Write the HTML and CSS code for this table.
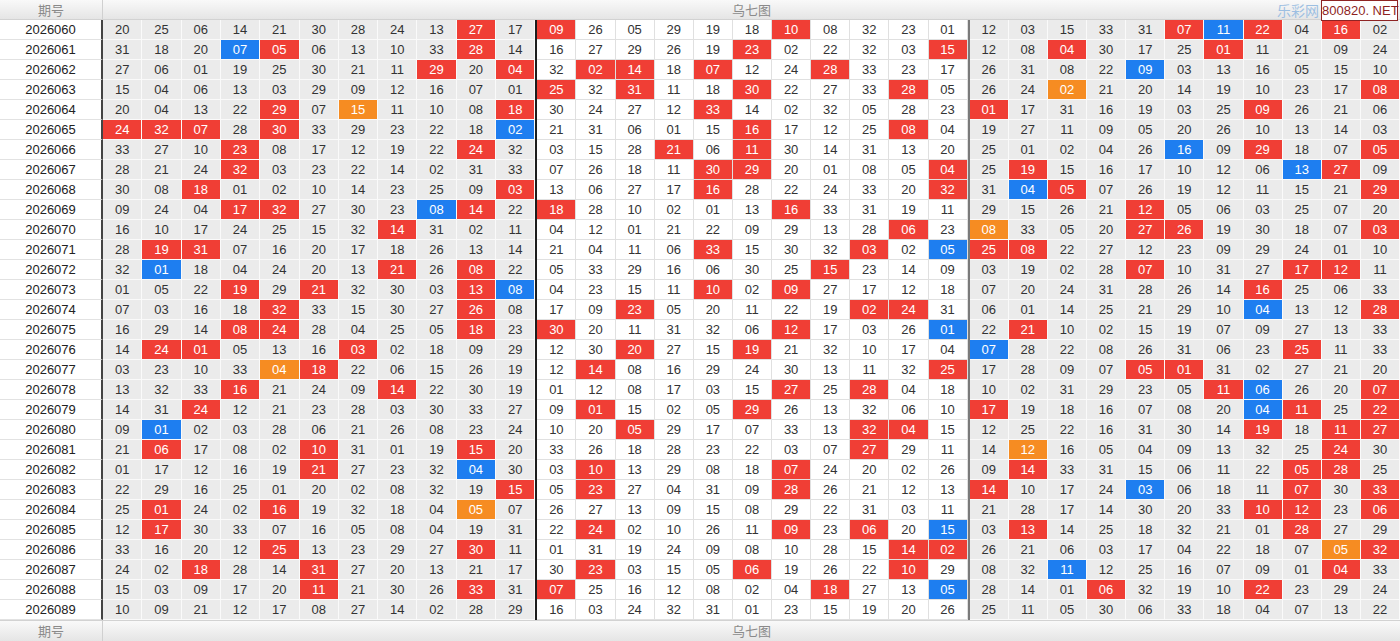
FILE: index.html
```html
<!DOCTYPE html>
<html lang="zh">
<head>
<meta charset="utf-8">
<title>乌七图</title>
<link rel="stylesheet" href="styles.css">
</head>
<body>
<div class="chart">
  <div class="bar head">
    <div class="bq">期号</div>
    <div class="bt">乌七图</div>
    <span class="wm">乐彩网</span>
    <span class="logo">800820. NET</span>
  </div>

  <div class="row"><div class="q">2026060</div>
    <div class="z z1"><i>20</i><i>25</i><i>06</i><i>14</i><i>21</i><i>30</i><i>28</i><i>24</i><i>13</i><i class="r">27</i><i>17</i></div>
    <div class="z z2"><i class="r">09</i><i>26</i><i>05</i><i>29</i><i>19</i><i>18</i><i class="r">10</i><i>08</i><i>32</i><i>23</i><i>01</i></div>
    <div class="z z3"><i>12</i><i>03</i><i>15</i><i>33</i><i>31</i><i class="r">07</i><i class="b">11</i><i class="r">22</i><i>04</i><i class="r">16</i><i>02</i></div>
  </div>
  <div class="row"><div class="q">2026061</div>
    <div class="z z1"><i>31</i><i>18</i><i>20</i><i class="b">07</i><i class="r">05</i><i>06</i><i>13</i><i>10</i><i>33</i><i class="r">28</i><i>14</i></div>
    <div class="z z2"><i>16</i><i>27</i><i>29</i><i>26</i><i>19</i><i class="r">23</i><i>02</i><i>22</i><i>32</i><i>03</i><i class="r">15</i></div>
    <div class="z z3"><i>12</i><i>08</i><i class="r">04</i><i>30</i><i>17</i><i>25</i><i class="r">01</i><i>11</i><i>21</i><i>09</i><i>24</i></div>
  </div>
  <div class="row"><div class="q">2026062</div>
    <div class="z z1"><i>27</i><i>06</i><i>01</i><i>19</i><i>25</i><i>30</i><i>21</i><i>11</i><i class="r">29</i><i>20</i><i class="r">04</i></div>
    <div class="z z2"><i>32</i><i class="r">02</i><i class="r">14</i><i>18</i><i class="r">07</i><i>12</i><i>24</i><i class="r">28</i><i>33</i><i>23</i><i>17</i></div>
    <div class="z z3"><i>26</i><i>31</i><i>08</i><i>22</i><i class="b">09</i><i>03</i><i>13</i><i>16</i><i>05</i><i>15</i><i>10</i></div>
  </div>
  <div class="row"><div class="q">2026063</div>
    <div class="z z1"><i>15</i><i>04</i><i>06</i><i>13</i><i>03</i><i>29</i><i>09</i><i>12</i><i>16</i><i>07</i><i>01</i></div>
    <div class="z z2"><i class="r">25</i><i>32</i><i class="r">31</i><i>11</i><i>18</i><i class="r">30</i><i>22</i><i>27</i><i>33</i><i class="r">28</i><i>05</i></div>
    <div class="z z3"><i>26</i><i>24</i><i class="o">02</i><i>21</i><i>20</i><i>14</i><i>19</i><i>10</i><i>23</i><i>17</i><i class="r">08</i></div>
  </div>
  <div class="row"><div class="q">2026064</div>
    <div class="z z1"><i>20</i><i>04</i><i>13</i><i>22</i><i class="r">29</i><i>07</i><i class="o">15</i><i>11</i><i>10</i><i>08</i><i class="r">18</i></div>
    <div class="z z2"><i>30</i><i>24</i><i>27</i><i>12</i><i class="r">33</i><i>14</i><i>02</i><i>32</i><i>05</i><i>28</i><i>23</i></div>
    <div class="z z3"><i class="r">01</i><i>17</i><i>31</i><i>16</i><i>19</i><i>03</i><i>25</i><i class="r">09</i><i>26</i><i>21</i><i>06</i></div>
  </div>
  <div class="row"><div class="q">2026065</div>
    <div class="z z1"><i class="r">24</i><i class="r">32</i><i class="r">07</i><i>28</i><i class="r">30</i><i>33</i><i>29</i><i>23</i><i>22</i><i>18</i><i class="b">02</i></div>
    <div class="z z2"><i>21</i><i>31</i><i>06</i><i>01</i><i>15</i><i class="r">16</i><i>17</i><i>12</i><i>25</i><i class="r">08</i><i>04</i></div>
    <div class="z z3"><i>19</i><i>27</i><i>11</i><i>09</i><i>05</i><i>20</i><i>26</i><i>10</i><i>13</i><i>14</i><i>03</i></div>
  </div>
  <div class="row"><div class="q">2026066</div>
    <div class="z z1"><i>33</i><i>27</i><i>10</i><i class="r">23</i><i>08</i><i>17</i><i>12</i><i>19</i><i>22</i><i class="r">24</i><i>32</i></div>
    <div class="z z2"><i>03</i><i>15</i><i>28</i><i class="r">21</i><i>06</i><i class="r">11</i><i>30</i><i>14</i><i>31</i><i>13</i><i>20</i></div>
    <div class="z z3"><i>25</i><i>01</i><i>02</i><i>04</i><i>26</i><i class="b">16</i><i>09</i><i class="r">29</i><i>18</i><i>07</i><i class="r">05</i></div>
  </div>
  <div class="row"><div class="q">2026067</div>
    <div class="z z1"><i>28</i><i>21</i><i>24</i><i class="r">32</i><i>03</i><i>23</i><i>22</i><i>14</i><i>02</i><i>31</i><i>33</i></div>
    <div class="z z2"><i>07</i><i>26</i><i>18</i><i>11</i><i class="r">30</i><i class="r">29</i><i>20</i><i>01</i><i>08</i><i>05</i><i class="r">04</i></div>
    <div class="z z3"><i>25</i><i class="r">19</i><i>15</i><i>16</i><i>17</i><i>10</i><i>12</i><i>06</i><i class="b">13</i><i class="r">27</i><i>09</i></div>
  </div>
  <div class="row"><div class="q">2026068</div>
    <div class="z z1"><i>30</i><i>08</i><i class="r">18</i><i>01</i><i>02</i><i>10</i><i>14</i><i>23</i><i>25</i><i>09</i><i class="r">03</i></div>
    <div class="z z2"><i>13</i><i>06</i><i>27</i><i>17</i><i class="r">16</i><i>28</i><i>22</i><i>24</i><i>33</i><i>20</i><i class="r">32</i></div>
    <div class="z z3"><i>31</i><i class="b">04</i><i class="r">05</i><i>07</i><i>26</i><i>19</i><i>12</i><i>11</i><i>15</i><i>21</i><i class="r">29</i></div>
  </div>
  <div class="row"><div class="q">2026069</div>
    <div class="z z1"><i>09</i><i>24</i><i>04</i><i class="r">17</i><i class="r">32</i><i>27</i><i>30</i><i>23</i><i class="b">08</i><i class="r">14</i><i>22</i></div>
    <div class="z z2"><i class="r">18</i><i>28</i><i>10</i><i>02</i><i>01</i><i>13</i><i class="r">16</i><i>33</i><i>31</i><i>19</i><i>11</i></div>
    <div class="z z3"><i>29</i><i>15</i><i>26</i><i>21</i><i class="r">12</i><i>05</i><i>06</i><i>03</i><i>25</i><i>07</i><i>20</i></div>
  </div>
  <div class="row"><div class="q">2026070</div>
    <div class="z z1"><i>16</i><i>10</i><i>17</i><i>24</i><i>25</i><i>15</i><i>32</i><i class="r">14</i><i>31</i><i>02</i><i>11</i></div>
    <div class="z z2"><i>04</i><i>12</i><i>01</i><i>21</i><i>22</i><i>09</i><i>29</i><i>13</i><i>28</i><i class="r">06</i><i>23</i></div>
    <div class="z z3"><i class="o">08</i><i>33</i><i>05</i><i>20</i><i class="r">27</i><i class="r">26</i><i>19</i><i>30</i><i>18</i><i>07</i><i class="r">03</i></div>
  </div>
  <div class="row"><div class="q">2026071</div>
    <div class="z z1"><i>28</i><i class="r">19</i><i class="r">31</i><i>07</i><i>16</i><i>20</i><i>17</i><i>18</i><i>26</i><i>13</i><i>14</i></div>
    <div class="z z2"><i>21</i><i>04</i><i>11</i><i>06</i><i class="r">33</i><i>15</i><i>30</i><i>32</i><i class="r">03</i><i>02</i><i class="b">05</i></div>
    <div class="z z3"><i class="r">25</i><i class="r">08</i><i>22</i><i>27</i><i>12</i><i>23</i><i>09</i><i>29</i><i>24</i><i>01</i><i>10</i></div>
  </div>
  <div class="row"><div class="q">2026072</div>
    <div class="z z1"><i>32</i><i class="b">01</i><i>18</i><i>04</i><i>24</i><i>20</i><i>13</i><i class="r">21</i><i>26</i><i class="r">08</i><i>22</i></div>
    <div class="z z2"><i>05</i><i>33</i><i>29</i><i>16</i><i>06</i><i>30</i><i>25</i><i class="r">15</i><i>23</i><i>14</i><i>09</i></div>
    <div class="z z3"><i>03</i><i>19</i><i>02</i><i>28</i><i class="r">07</i><i>10</i><i>31</i><i>27</i><i class="r">17</i><i class="r">12</i><i>11</i></div>
  </div>
  <div class="row"><div class="q">2026073</div>
    <div class="z z1"><i>01</i><i>05</i><i>22</i><i class="r">19</i><i>29</i><i class="r">21</i><i>32</i><i>30</i><i>03</i><i class="r">13</i><i class="b">08</i></div>
    <div class="z z2"><i>04</i><i>23</i><i>15</i><i>11</i><i class="r">10</i><i>02</i><i class="r">09</i><i>27</i><i>17</i><i>12</i><i>18</i></div>
    <div class="z z3"><i>07</i><i>20</i><i>24</i><i>31</i><i>28</i><i>26</i><i>14</i><i class="r">16</i><i>25</i><i>06</i><i>33</i></div>
  </div>
  <div class="row"><div class="q">2026074</div>
    <div class="z z1"><i>07</i><i>03</i><i>16</i><i>18</i><i class="r">32</i><i>33</i><i>15</i><i>30</i><i>27</i><i class="r">26</i><i>08</i></div>
    <div class="z z2"><i>17</i><i>09</i><i class="r">23</i><i>05</i><i>20</i><i>11</i><i>22</i><i>19</i><i class="r">02</i><i class="r">24</i><i>31</i></div>
    <div class="z z3"><i>06</i><i>01</i><i>14</i><i>25</i><i>21</i><i>29</i><i>10</i><i class="b">04</i><i>13</i><i>12</i><i class="r">28</i></div>
  </div>
  <div class="row"><div class="q">2026075</div>
    <div class="z z1"><i>16</i><i>29</i><i>14</i><i class="r">08</i><i class="r">24</i><i>28</i><i>04</i><i>25</i><i>05</i><i class="r">18</i><i>23</i></div>
    <div class="z z2"><i class="r">30</i><i>20</i><i>11</i><i>31</i><i>32</i><i>06</i><i class="r">12</i><i>17</i><i>03</i><i>26</i><i class="b">01</i></div>
    <div class="z z3"><i>22</i><i class="r">21</i><i>10</i><i>02</i><i>15</i><i>19</i><i>07</i><i>09</i><i>27</i><i>13</i><i>33</i></div>
  </div>
  <div class="row"><div class="q">2026076</div>
    <div class="z z1"><i>14</i><i class="r">24</i><i class="r">01</i><i>05</i><i>13</i><i>16</i><i class="r">03</i><i>02</i><i>18</i><i>09</i><i>29</i></div>
    <div class="z z2"><i>12</i><i>30</i><i class="r">20</i><i>27</i><i>15</i><i class="r">19</i><i>21</i><i>32</i><i>10</i><i>17</i><i>04</i></div>
    <div class="z z3"><i class="b">07</i><i>28</i><i>22</i><i>08</i><i>26</i><i>31</i><i>06</i><i>23</i><i class="r">25</i><i>11</i><i>33</i></div>
  </div>
  <div class="row"><div class="q">2026077</div>
    <div class="z z1"><i>03</i><i>23</i><i>10</i><i>33</i><i class="o">04</i><i class="r">18</i><i>22</i><i>06</i><i>15</i><i>26</i><i>19</i></div>
    <div class="z z2"><i>12</i><i class="r">14</i><i>08</i><i>16</i><i>29</i><i>24</i><i>30</i><i>13</i><i>11</i><i>32</i><i class="r">25</i></div>
    <div class="z z3"><i>17</i><i>28</i><i>09</i><i>07</i><i class="r">05</i><i class="r">01</i><i>31</i><i>02</i><i>27</i><i>21</i><i>20</i></div>
  </div>
  <div class="row"><div class="q">2026078</div>
    <div class="z z1"><i>13</i><i>32</i><i>33</i><i class="r">16</i><i>21</i><i>24</i><i>09</i><i class="r">14</i><i>22</i><i>30</i><i>19</i></div>
    <div class="z z2"><i>01</i><i>12</i><i>08</i><i>17</i><i>03</i><i>15</i><i class="r">27</i><i>25</i><i class="r">28</i><i>04</i><i>18</i></div>
    <div class="z z3"><i>10</i><i>02</i><i>31</i><i>29</i><i>23</i><i>05</i><i class="r">11</i><i class="b">06</i><i>26</i><i>20</i><i class="r">07</i></div>
  </div>
  <div class="row"><div class="q">2026079</div>
    <div class="z z1"><i>14</i><i>31</i><i class="r">24</i><i>12</i><i>21</i><i>23</i><i>28</i><i>03</i><i>30</i><i>33</i><i>27</i></div>
    <div class="z z2"><i>09</i><i class="r">01</i><i>15</i><i>02</i><i>05</i><i class="r">29</i><i>26</i><i>13</i><i>32</i><i>06</i><i>10</i></div>
    <div class="z z3"><i class="r">17</i><i>19</i><i>18</i><i>16</i><i>07</i><i>08</i><i>20</i><i class="b">04</i><i class="r">11</i><i>25</i><i class="r">22</i></div>
  </div>
  <div class="row"><div class="q">2026080</div>
    <div class="z z1"><i>09</i><i class="b">01</i><i>02</i><i>03</i><i>28</i><i>06</i><i>21</i><i>26</i><i>08</i><i>23</i><i>24</i></div>
    <div class="z z2"><i>10</i><i>20</i><i class="r">05</i><i>29</i><i>17</i><i>07</i><i>33</i><i>13</i><i class="r">32</i><i class="r">04</i><i>15</i></div>
    <div class="z z3"><i>12</i><i>25</i><i>22</i><i>16</i><i>31</i><i>30</i><i>14</i><i class="r">19</i><i>18</i><i class="r">11</i><i class="r">27</i></div>
  </div>
  <div class="row"><div class="q">2026081</div>
    <div class="z z1"><i>21</i><i class="r">06</i><i>17</i><i>08</i><i>02</i><i class="r">10</i><i>31</i><i>01</i><i>19</i><i class="r">15</i><i>20</i></div>
    <div class="z z2"><i>33</i><i>26</i><i>18</i><i>28</i><i>23</i><i>22</i><i>03</i><i>07</i><i class="r">27</i><i>29</i><i>11</i></div>
    <div class="z z3"><i>14</i><i class="o">12</i><i>16</i><i>05</i><i>04</i><i>09</i><i>13</i><i>32</i><i>25</i><i class="r">24</i><i>30</i></div>
  </div>
  <div class="row"><div class="q">2026082</div>
    <div class="z z1"><i>01</i><i>17</i><i>12</i><i>16</i><i>19</i><i class="r">21</i><i>27</i><i>23</i><i>32</i><i class="b">04</i><i>30</i></div>
    <div class="z z2"><i>03</i><i class="r">10</i><i>13</i><i>29</i><i>08</i><i>18</i><i class="r">07</i><i>24</i><i>20</i><i>02</i><i>26</i></div>
    <div class="z z3"><i>09</i><i class="r">14</i><i>33</i><i>31</i><i>15</i><i>06</i><i>11</i><i>22</i><i class="r">05</i><i class="r">28</i><i>25</i></div>
  </div>
  <div class="row"><div class="q">2026083</div>
    <div class="z z1"><i>22</i><i>29</i><i>16</i><i>25</i><i>01</i><i>20</i><i>02</i><i>08</i><i>32</i><i>19</i><i class="r">15</i></div>
    <div class="z z2"><i>05</i><i class="r">23</i><i>27</i><i>04</i><i>31</i><i>09</i><i class="r">28</i><i>26</i><i>21</i><i>12</i><i>13</i></div>
    <div class="z z3"><i class="r">14</i><i>10</i><i>17</i><i>24</i><i class="b">03</i><i>06</i><i>18</i><i>11</i><i class="r">07</i><i>30</i><i class="r">33</i></div>
  </div>
  <div class="row"><div class="q">2026084</div>
    <div class="z z1"><i>25</i><i class="r">01</i><i>24</i><i>02</i><i class="r">16</i><i>19</i><i>32</i><i>18</i><i>04</i><i class="o">05</i><i>07</i></div>
    <div class="z z2"><i>26</i><i>27</i><i>13</i><i>09</i><i>15</i><i>08</i><i>29</i><i>22</i><i>31</i><i>03</i><i>11</i></div>
    <div class="z z3"><i>21</i><i>28</i><i>17</i><i>14</i><i>30</i><i>20</i><i>33</i><i class="r">10</i><i class="r">12</i><i>23</i><i class="r">06</i></div>
  </div>
  <div class="row"><div class="q">2026085</div>
    <div class="z z1"><i>12</i><i class="r">17</i><i>30</i><i>33</i><i>07</i><i>16</i><i>05</i><i>08</i><i>04</i><i>19</i><i>31</i></div>
    <div class="z z2"><i>22</i><i class="r">24</i><i>02</i><i>10</i><i>26</i><i>11</i><i class="r">09</i><i>23</i><i class="r">06</i><i>20</i><i class="b">15</i></div>
    <div class="z z3"><i>03</i><i class="r">13</i><i>14</i><i>25</i><i>18</i><i>32</i><i>21</i><i>01</i><i class="r">28</i><i>27</i><i>29</i></div>
  </div>
  <div class="row"><div class="q">2026086</div>
    <div class="z z1"><i>33</i><i>16</i><i>20</i><i>12</i><i class="r">25</i><i>13</i><i>23</i><i>29</i><i>27</i><i class="r">30</i><i>11</i></div>
    <div class="z z2"><i>01</i><i>31</i><i>19</i><i>24</i><i>09</i><i>08</i><i>10</i><i>28</i><i>15</i><i class="r">14</i><i class="r">02</i></div>
    <div class="z z3"><i>26</i><i>21</i><i>06</i><i>03</i><i>17</i><i>04</i><i>22</i><i>18</i><i>07</i><i class="o">05</i><i class="r">32</i></div>
  </div>
  <div class="row"><div class="q">2026087</div>
    <div class="z z1"><i>24</i><i>02</i><i class="r">18</i><i>28</i><i>14</i><i class="r">31</i><i>27</i><i>20</i><i>13</i><i>21</i><i>17</i></div>
    <div class="z z2"><i>30</i><i class="r">23</i><i>03</i><i>15</i><i>05</i><i class="r">06</i><i>19</i><i>26</i><i>22</i><i class="r">10</i><i>29</i></div>
    <div class="z z3"><i>08</i><i>32</i><i class="b">11</i><i>12</i><i>25</i><i>16</i><i>07</i><i>09</i><i>01</i><i class="r">04</i><i>33</i></div>
  </div>
  <div class="row"><div class="q">2026088</div>
    <div class="z z1"><i>15</i><i>03</i><i>09</i><i>17</i><i>20</i><i class="r">11</i><i>21</i><i>30</i><i>26</i><i class="r">33</i><i>31</i></div>
    <div class="z z2"><i class="r">07</i><i>25</i><i>16</i><i>12</i><i>08</i><i>02</i><i>04</i><i class="r">18</i><i>27</i><i>13</i><i class="b">05</i></div>
    <div class="z z3"><i>28</i><i>14</i><i>01</i><i class="r">06</i><i>32</i><i>19</i><i>10</i><i class="r">22</i><i>23</i><i>29</i><i>24</i></div>
  </div>
  <div class="row"><div class="q">2026089</div>
    <div class="z z1"><i>10</i><i>09</i><i>21</i><i>12</i><i>17</i><i>08</i><i>27</i><i>14</i><i>02</i><i>28</i><i>29</i></div>
    <div class="z z2"><i>16</i><i>03</i><i>24</i><i>32</i><i>31</i><i>01</i><i>23</i><i>15</i><i>19</i><i>20</i><i>26</i></div>
    <div class="z z3"><i>25</i><i>11</i><i>05</i><i>30</i><i>06</i><i>33</i><i>18</i><i>04</i><i>07</i><i>13</i><i>22</i></div>
  </div>

  <div class="bar foot">
    <div class="bq">期号</div>
    <div class="bt">乌七图</div>
  </div>
</div>
</body>
</html>
```

FILE: styles.css
```css
* { box-sizing: border-box; }

body {
  margin: 0;
  background: #fff;
  font-family: "Liberation Sans", Arial, "Noto Sans CJK SC", sans-serif;
}

.chart {
  width: 1400px;
}

.bar {
  position: relative;
  display: grid;
  grid-template-columns: 103px 1fr;
  height: 20px;
  background: linear-gradient(#f9f9f9, #e5e5e5);
  border-bottom: 1px solid #d2d2d2;
  color: #8a8a8a;
  font-size: 13px;
  line-height: 19px;
  text-align: center;
  font-family: "Noto Sans CJK SC", "Liberation Sans", sans-serif;
}

.foot {
  height: 21px;
  border-top: 1px solid #d2d2d2;
  border-bottom: 0;
}

.bq {
  border-right: 1px solid #d0d0d0;
}

.wm {
  position: absolute;
  left: 1277px;
  top: 0;
  color: #9dbfe2;
  font-size: 14px;
  line-height: 20px;
  white-space: nowrap;
}

.logo {
  position: absolute;
  right: 2px;
  top: 0;
  width: 77px;
  height: 21px;
  border: 1px solid #8e2424;
  background: #fff;
  color: #8e1f1f;
  font-family: "Liberation Sans", Arial, sans-serif;
  font-size: 13px;
  line-height: 19px;
  text-align: center;
  white-space: nowrap;
  z-index: 2;
}

.row {
  display: grid;
  grid-template-columns: 103px 1fr 1fr 1fr;
  height: 20px;
}

.q {
  background: #fff;
  border-right: 2px solid #444;
  border-bottom: 1px solid #e2e2e2;
  color: #222;
  font-size: 13px;
  line-height: 19px;
  text-align: center;
}

.z {
  display: grid;
  grid-template-columns: repeat(11, 1fr);
}

.z2 {
  border-left: 2px solid #1e1e1e;
}

.z3 {
  border-left: 2px solid #7a7a7a;
}

.z i {
  font-style: normal;
  height: 20px;
  background: #ebebeb;
  border-right: 1px solid #fafafa;
  border-bottom: 1px solid #fafafa;
  color: #333;
  font-size: 13px;
  line-height: 19px;
  text-align: center;
}

.z2 i {
  background: #fff;
  border-color: #e0e0e0;
}

.z i.r {
  background: #f03e35;
  color: #fff;
}

.z i.b {
  background: #1e7ef0;
  color: #fff;
}

.z i.o {
  background: #f68c22;
  color: #fff;
}
```
